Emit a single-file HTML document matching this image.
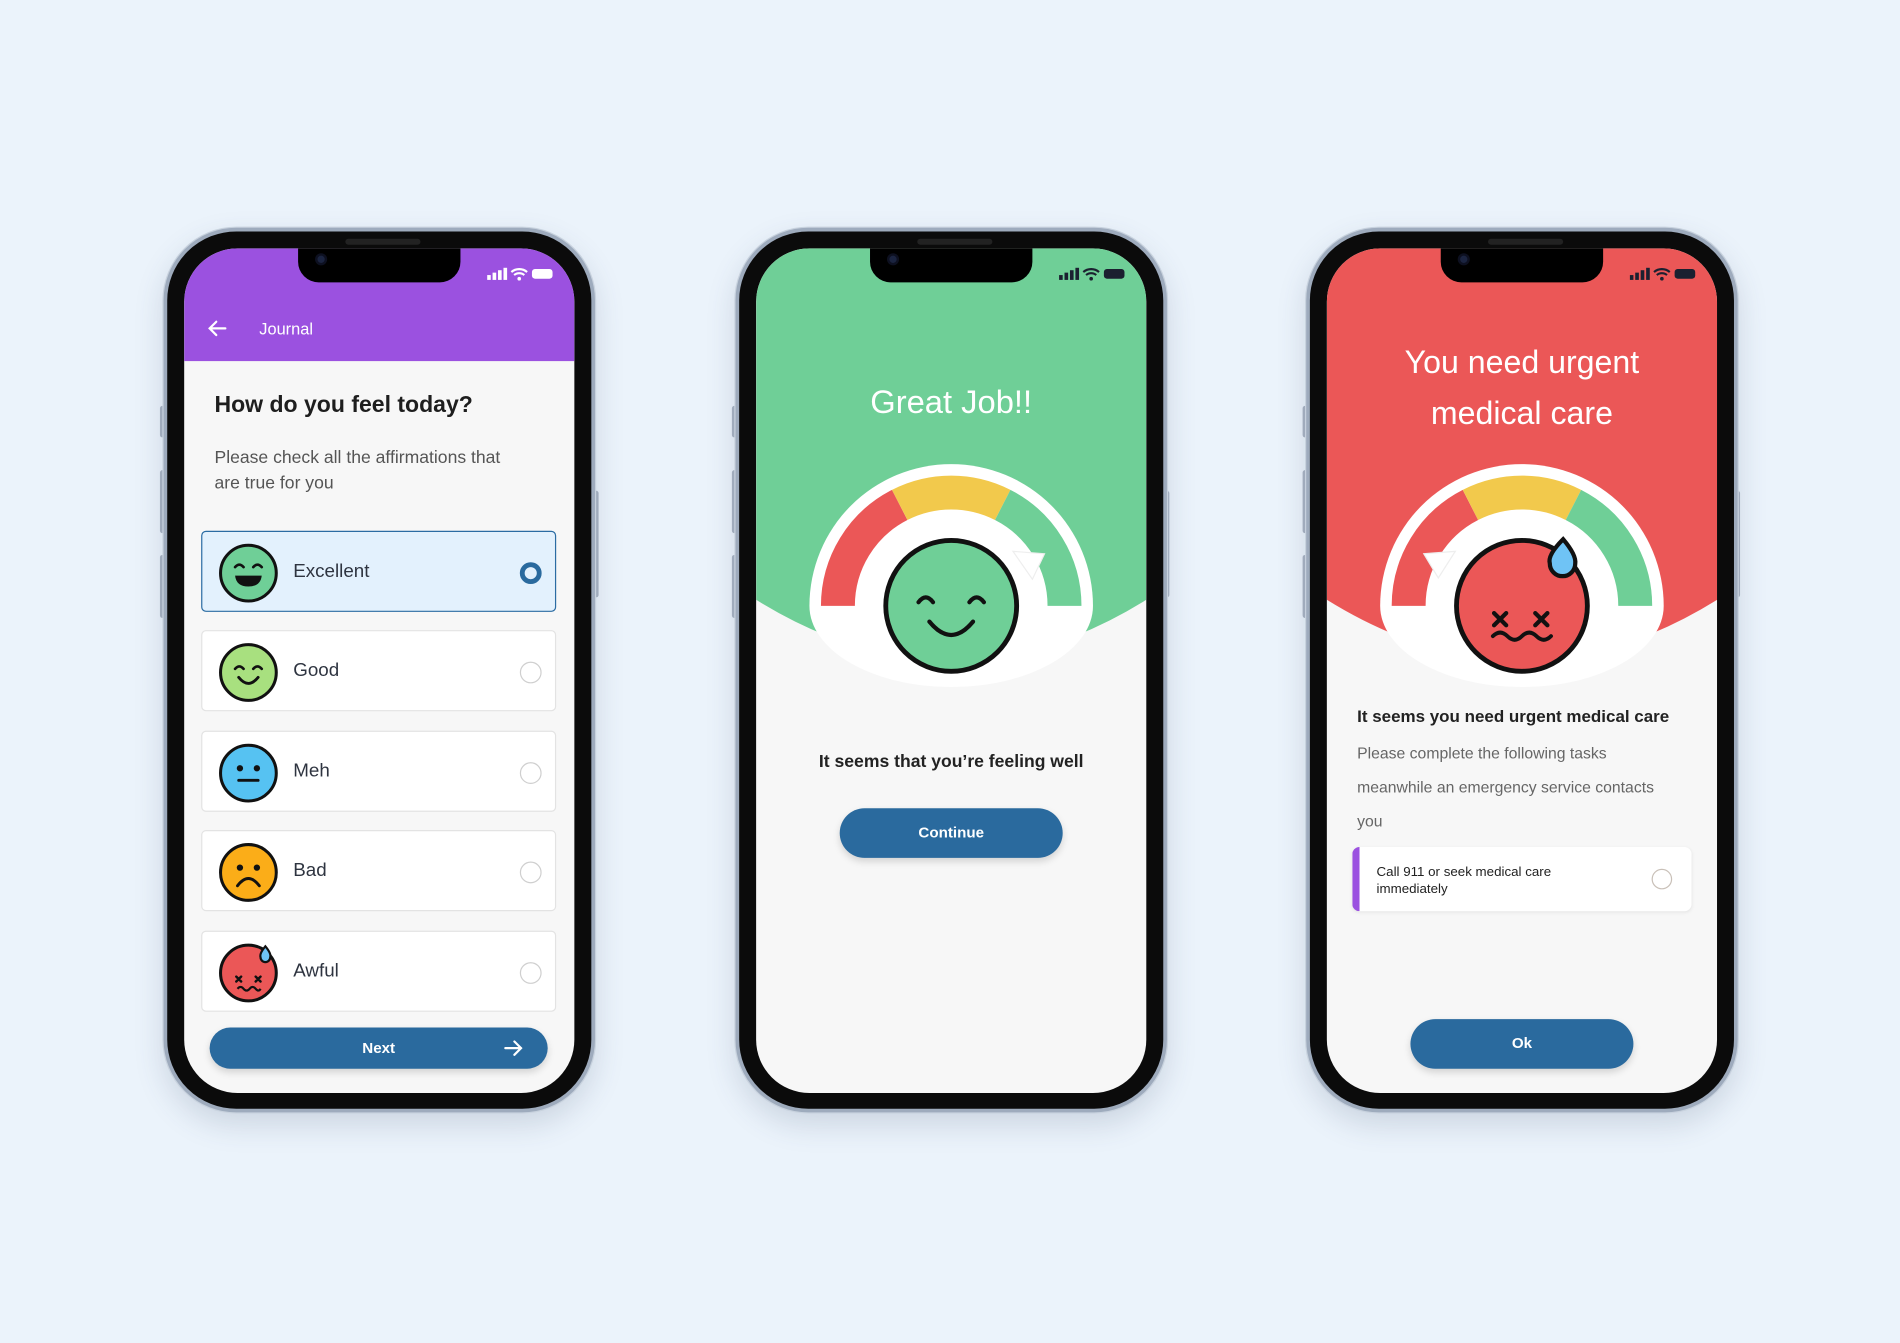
<!DOCTYPE html>
<html><head><meta charset="utf-8"><style>
*{margin:0;padding:0;box-sizing:border-box}
html,body{width:1900px;height:1342px;overflow:hidden;background:#EBF3FB;font-family:"Liberation Sans",sans-serif}
#w{position:absolute;left:0;top:0;width:1568px;height:1108px;transform:scale(1.21173);transform-origin:0 0}
.ph{position:absolute;top:188px;width:356px;height:730px;border-radius:60px;background:#0b0b0b;border:3px solid #9eabbd;box-shadow:0 0 0 1px #c8d2de,0 10px 24px rgba(60,80,110,.18)}
.btn{position:absolute;background:#a9b4c3;width:4px;border-radius:2px}
.sc{position:absolute;left:14px;top:14px;width:322px;height:697px;border-radius:44px;overflow:hidden;background:#F7F7F7}
.notch{position:absolute;left:94px;top:0;width:134px;height:28px;background:#000;border-radius:0 0 17px 17px;z-index:5}
.notch i{position:absolute;left:14px;top:4px;width:10px;height:10px;border-radius:50%;background:#1b2440;border:2px solid #0d1020}
.spk{position:absolute;left:147px;top:6px;width:62px;height:5px;border-radius:3px;background:#222;z-index:6}
.st{position:absolute;right:16px;top:15px;z-index:6}
.card{position:absolute;left:14px;width:293px;height:67px;background:#fff;border:1px solid #e3e3e3;border-radius:4px}
.card svg{position:absolute;left:13px;top:9px}
.card span{position:absolute;left:75px;top:24px;font-size:15.5px;color:#2e3440}
.rad{position:absolute;left:262px;top:25px;width:18px;height:18px;border-radius:50%;border:1.5px solid #cfcfcf}
.bt{position:absolute;background:#2A6A9E;color:#fff;font-weight:bold;font-size:12.5px;text-align:center;border-radius:22px;box-shadow:0 3px 6px rgba(0,0,0,.15)}
</style></head><body><div id="w">

<!-- PHONE 1 -->
<div class="btn" style="left:132px;top:335px;height:26px"></div>
<div class="btn" style="left:132px;top:388px;height:52px"></div>
<div class="btn" style="left:132px;top:458px;height:52px"></div>
<div class="btn" style="left:490px;top:405px;height:88px"></div>
<div class="ph" style="left:135px">
 <div class="spk"></div>
 <div class="sc">
  <div class="notch"><i></i></div>
  <div style="position:absolute;left:0;top:0;width:322px;height:93px;background:#9B51E0"></div>
  <svg class="st" width="56" height="12" viewBox="0 0 56 12"><g fill="#fff"><rect x="0" y="7" width="3" height="4"/><rect x="4.5" y="5" width="3" height="6"/><rect x="9" y="3" width="3" height="8"/><rect x="13.5" y="1" width="3" height="10"/></g><path d="M20 4.5a10 10 0 0 1 13 0M22.3 7a6.5 6.5 0 0 1 8.4 0" stroke="#fff" stroke-width="1.8" fill="none"/><circle cx="26.5" cy="10" r="1.5" fill="#fff"/><rect x="37" y="2" width="17" height="8" rx="2.5" fill="#fff"/></svg>
  <svg style="position:absolute;left:19px;top:59px" width="16" height="14" viewBox="0 0 16 14"><path d="M15 7H2M7.5 1.5L2 7l5.5 5.5" stroke="#fff" stroke-width="1.8" fill="none" stroke-linecap="round"/></svg>
  <div style="position:absolute;left:62px;top:59px;color:#fff;font-size:13.5px">Journal</div>
  <div style="position:absolute;left:25px;top:119px;font-size:19px;font-weight:bold;color:#1e1e1e">How do you feel today?</div>
  <div style="position:absolute;left:25px;top:163px;font-size:14.5px;line-height:21px;color:#555;width:250px">Please check all the affirmations that are true for you</div>

  <div class="card" style="top:233px;background:#E3F1FD;border-color:#2B6CA3">
   <svg width="50" height="50" viewBox="0 0 50 50"><circle cx="25" cy="25" r="23" fill="#6FCF97" stroke="#111" stroke-width="2.5"/><path d="M14 20q3.5-4 7 0M29 20q3.5-4 7 0" stroke="#111" stroke-width="2.2" fill="none" stroke-linecap="round"/><path d="M14 27h22q-1 9-11 9t-11-9z" fill="#111"/></svg>
   <span>Excellent</span>
   <div class="rad" style="border:4px solid #2A6A9E"></div>
  </div>
  <div class="card" style="top:315px">
   <svg width="50" height="50" viewBox="0 0 50 50"><circle cx="25" cy="25" r="23" fill="#A8E07F" stroke="#111" stroke-width="2.5"/><path d="M14 22q3.5-4 7 0M29 22q3.5-4 7 0" stroke="#111" stroke-width="2.2" fill="none" stroke-linecap="round"/><path d="M17 29q8 10 16 0" stroke="#111" stroke-width="2.4" fill="none" stroke-linecap="round"/></svg>
   <span>Good</span><div class="rad"></div>
  </div>
  <div class="card" style="top:398px">
   <svg width="50" height="50" viewBox="0 0 50 50"><circle cx="25" cy="25" r="23" fill="#56C2F2" stroke="#111" stroke-width="2.5"/><circle cx="18" cy="21" r="2.6" fill="#111"/><circle cx="32" cy="21" r="2.6" fill="#111"/><path d="M17 31h16" stroke="#111" stroke-width="2.4" stroke-linecap="round"/></svg>
   <span>Meh</span><div class="rad"></div>
  </div>
  <div class="card" style="top:480px">
   <svg width="50" height="50" viewBox="0 0 50 50"><circle cx="25" cy="25" r="23" fill="#FBAD18" stroke="#111" stroke-width="2.5"/><circle cx="18" cy="21" r="2.6" fill="#111"/><circle cx="32" cy="21" r="2.6" fill="#111"/><path d="M16 36q9-12 18 0" stroke="#111" stroke-width="2.4" fill="none" stroke-linecap="round"/></svg>
   <span>Bad</span><div class="rad"></div>
  </div>
  <div class="card" style="top:563px">
   <svg width="50" height="50" viewBox="0 0 50 50"><circle cx="25" cy="25" r="23" fill="#EB5757" stroke="#111" stroke-width="2.5"/><path d="M15 28l4 4M19 28l-4 4M31 28l4 4M35 28l-4 4" stroke="#111" stroke-width="2" stroke-linecap="round"/><path d="M16 38q2.5-3 5 0t5 0t5 0t4 0" stroke="#111" stroke-width="1.8" fill="none"/><path d="M39 3q-5 6-4 9a4 4 0 0 0 8 0q1-3-4-9z" fill="#6FC3F5" stroke="#111" stroke-width="1.8"/></svg>
   <span>Awful</span><div class="rad"></div>
  </div>
  <div class="bt" style="left:21px;top:643px;width:279px;height:34px;line-height:34px">Next
   <svg style="position:absolute;right:20px;top:10px" width="16" height="14" viewBox="0 0 16 14"><path d="M1 7h13M8.5 1.5L14 7l-5.5 5.5" stroke="#fff" stroke-width="1.8" fill="none" stroke-linecap="round"/></svg></div>
 </div>
</div>

<!-- PHONE 2 -->
<div class="btn" style="left:604px;top:335px;height:26px"></div>
<div class="btn" style="left:604px;top:388px;height:52px"></div>
<div class="btn" style="left:604px;top:458px;height:52px"></div>
<div class="btn" style="left:961px;top:405px;height:88px"></div>
<div class="ph" style="left:607px">
 <div class="spk"></div>
 <div class="sc">
  <div class="notch"><i></i></div>
  <svg style="position:absolute;left:0;top:0" width="322" height="420" viewBox="0 0 322 420"><path d="M0 0H322V290Q161 390 0 290Z" fill="#6FCF97"/></svg>
  <svg class="st" width="56" height="12" viewBox="0 0 56 12"><g fill="#1b2030"><rect x="0" y="7" width="3" height="4"/><rect x="4.5" y="5" width="3" height="6"/><rect x="9" y="3" width="3" height="8"/><rect x="13.5" y="1" width="3" height="10"/></g><path d="M20 4.5a10 10 0 0 1 13 0M22.3 7a6.5 6.5 0 0 1 8.4 0" stroke="#1b2030" stroke-width="1.8" fill="none"/><circle cx="26.5" cy="10" r="1.5" fill="#1b2030"/><rect x="37" y="2" width="17" height="8" rx="2.5" fill="#1b2030"/></svg>
  <div style="position:absolute;left:0;width:322px;top:112px;text-align:center;color:#fff;font-size:27px">Great Job!!</div>
  <svg style="position:absolute;left:0;top:160px" width="322" height="220" viewBox="0 160 322 220">
   <path d="M44 295A117 117 0 0 1 278 295A117 67 0 0 1 44 295Z" fill="#fff"/>
   <path d="M67.5 295A93.5 93.5 0 0 1 118.5 211.7" stroke="#EB5757" stroke-width="28" fill="none"/>
   <path d="M118.5 211.7A93.5 93.5 0 0 1 203.5 211.7" stroke="#F2C94C" stroke-width="28" fill="none"/>
   <path d="M203.5 211.7A93.5 93.5 0 0 1 254.5 295" stroke="#6FCF97" stroke-width="28" fill="none"/>
   <path d="M212 250L238 252L228 273Z" fill="#fff" stroke="#eee" stroke-width="1"/>
   <circle cx="161" cy="295" r="54" fill="#6FCF97" stroke="#111" stroke-width="4"/>
   <path d="M134 292q6-8 12 0M176 292q6-8 12 0" stroke="#111" stroke-width="3.5" fill="none" stroke-linecap="round"/>
   <path d="M143 308q18 22 36 0" stroke="#111" stroke-width="3.5" fill="none" stroke-linecap="round"/>
  </svg>
  <div style="position:absolute;left:0;width:322px;top:416px;text-align:center;font-size:14.5px;font-weight:bold;color:#222">It seems that you’re feeling well</div>
  <div class="bt" style="left:69px;top:462px;width:184px;height:41px;line-height:41px">Continue</div>
 </div>
</div>

<!-- PHONE 3 -->
<div class="btn" style="left:1075px;top:335px;height:26px"></div>
<div class="btn" style="left:1075px;top:388px;height:52px"></div>
<div class="btn" style="left:1075px;top:458px;height:52px"></div>
<div class="btn" style="left:1432px;top:405px;height:88px"></div>
<div class="ph" style="left:1078px">
 <div class="spk"></div>
 <div class="sc">
  <div class="notch"><i></i></div>
  <svg style="position:absolute;left:0;top:0" width="322" height="420" viewBox="0 0 322 420"><path d="M0 0H322V290Q161 390 0 290Z" fill="#EB5757"/></svg>
  <svg class="st" width="56" height="12" viewBox="0 0 56 12"><g fill="#1b2030"><rect x="0" y="7" width="3" height="4"/><rect x="4.5" y="5" width="3" height="6"/><rect x="9" y="3" width="3" height="8"/><rect x="13.5" y="1" width="3" height="10"/></g><path d="M20 4.5a10 10 0 0 1 13 0M22.3 7a6.5 6.5 0 0 1 8.4 0" stroke="#1b2030" stroke-width="1.8" fill="none"/><circle cx="26.5" cy="10" r="1.5" fill="#1b2030"/><rect x="37" y="2" width="17" height="8" rx="2.5" fill="#1b2030"/></svg>
  <div style="position:absolute;left:0;width:322px;top:73px;text-align:center;color:#fff;font-size:26.5px;line-height:42px">You need urgent<br>medical care</div>
  <svg style="position:absolute;left:0;top:160px" width="322" height="220" viewBox="0 160 322 220">
   <path d="M44 295A117 117 0 0 1 278 295A117 67 0 0 1 44 295Z" fill="#fff"/>
   <path d="M67.5 295A93.5 93.5 0 0 1 118.5 211.7" stroke="#EB5757" stroke-width="28" fill="none"/>
   <path d="M118.5 211.7A93.5 93.5 0 0 1 203.5 211.7" stroke="#F2C94C" stroke-width="28" fill="none"/>
   <path d="M203.5 211.7A93.5 93.5 0 0 1 254.5 295" stroke="#6FCF97" stroke-width="28" fill="none"/>
   <path d="M80 252L106 250L92 272Z" fill="#fff" stroke="#eee" stroke-width="1"/>
   <circle cx="161" cy="295" r="54" fill="#EB5757" stroke="#111" stroke-width="4"/>
   <path d="M138 301l10 10M148 301l-10 10M172 301l10 10M182 301l-10 10" stroke="#111" stroke-width="3.5" stroke-linecap="round"/>
   <path d="M137 320q6-6 12 0t12 0t12 0t12 0" stroke="#111" stroke-width="3.2" fill="none" stroke-linecap="round"/>
   <path d="M195 240q-13 13-11 20a10 10 0 0 0 21 0q1-7-10-20z" fill="#6FC3F5" stroke="#111" stroke-width="3.5"/>
  </svg>
  <div style="position:absolute;left:25px;top:378px;font-size:14px;font-weight:bold;color:#222">It seems you need urgent medical care</div>
  <div style="position:absolute;left:25px;top:403px;font-size:13px;line-height:28px;color:#666;width:265px">Please complete the following tasks meanwhile an emergency service contacts you</div>
  <div style="position:absolute;left:21px;top:494px;width:280px;height:53px;background:#fff;border-radius:6px;box-shadow:0 1px 3px rgba(0,0,0,.08);border-left:6px solid #9B51E0">
   <div style="position:absolute;left:14px;top:14px;font-size:11px;line-height:14px;color:#222">Call 911 or seek medical care<br>immediately</div>
   <div style="position:absolute;left:241px;top:18px;width:17px;height:17px;border-radius:50%;border:1.5px solid #c9c0b8"></div>
  </div>
  <div class="bt" style="left:69px;top:636px;width:184px;height:41px;line-height:41px">Ok</div>
 </div>
</div>

</div></body></html>
